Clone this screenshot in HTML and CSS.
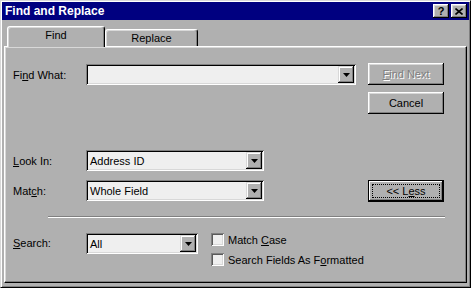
FILE: index.html
```html
<!DOCTYPE html>
<html lang="en">
<head>
    <meta charset="UTF-8">
    <title>Find and Replace</title>
    <link rel="stylesheet" href="styles.css">
</head>
<body>
    <div class="window">
        <div class="titlebar">
            <span class="title">Find and Replace</span>
            <div class="title-btns">
                <span class="tbtn help">?</span>
                <span class="tbtn">
                    <svg width="8" height="7" viewBox="0 0 8 7"><path d="M0.5 0.5 L7.5 6.5 M7.5 0.5 L0.5 6.5" stroke="#000" stroke-width="1.6" fill="none"/></svg>
                </span>
            </div>
        </div>
        <div class="client">
            <div class="tabs">
                <div class="tab active">Find</div>
                <div class="tab">Replace</div>
            </div>
            <div class="panel">
                <div class="upper">
                    <div class="fields">
                        <div class="row find">
                            <span class="label">Fi<u>n</u>d What:</span>
                            <div class="combo wide">
                                <span class="value"></span>
                                <span class="arrow"><svg width="7" height="4" viewBox="0 0 7 4"><path d="M0 0 H7 L3.5 4 Z"/></svg></span>
                            </div>
                        </div>
                        <div class="row look">
                            <span class="label"><u>L</u>ook In:</span>
                            <div class="combo mid">
                                <span class="value">Address ID</span>
                                <span class="arrow"><svg width="7" height="4" viewBox="0 0 7 4"><path d="M0 0 H7 L3.5 4 Z"/></svg></span>
                            </div>
                        </div>
                        <div class="row match">
                            <span class="label">Mat<u>c</u>h:</span>
                            <div class="combo mid">
                                <span class="value">Whole Field</span>
                                <span class="arrow"><svg width="7" height="4" viewBox="0 0 7 4"><path d="M0 0 H7 L3.5 4 Z"/></svg></span>
                            </div>
                        </div>
                    </div>
                    <div class="buttons">
                        <div class="btn disabled"><span><u>F</u>ind Next</span></div>
                        <div class="btn"><span>Cancel</span></div>
                        <div class="btn default less"><span class="focus"><span>&lt;&lt; L<u>e</u>ss</span></span></div>
                    </div>
                </div>
                <div class="sep"></div>
                <div class="lower">
                    <span class="label"><u>S</u>earch:</span>
                    <div class="combo narrow">
                        <span class="value">All</span>
                        <span class="arrow"><svg width="7" height="4" viewBox="0 0 7 4"><path d="M0 0 H7 L3.5 4 Z"/></svg></span>
                    </div>
                    <div class="checks">
                        <div class="check"><span class="box"></span><span>Match <u>C</u>ase</span></div>
                        <div class="check"><span class="box"></span><span>Search Fields As F<u>o</u>rmatted</span></div>
                    </div>
                </div>
            </div>
        </div>
    </div>
</body>
</html>
```

FILE: styles.css
```css
:root {
    --face: #b0b0b0;
    --light: #d8d8d8;
    --shadow: #808080;
    --field: #efefef;
}

body {
    margin: 0;
    font-family: "Liberation Sans", Arial, sans-serif;
    font-size: 11px;
    color: #000;
    background: var(--face);
}

u {
    text-underline-offset: 1px;
}

.window {
    width: 471px;
    height: 288px;
    box-sizing: border-box;
    padding: 1px;
    background: var(--face);
    border: 1px solid;
    border-color: var(--light) #000 #000 var(--light);
    box-shadow: inset 1px 1px #fff, inset -1px -1px var(--shadow);
    display: flex;
    flex-direction: column;
}

/* Title bar */
.titlebar {
    height: 18px;
    background: #000080;
    color: #fff;
    display: flex;
    align-items: center;
    justify-content: space-between;
    padding-left: 3px;
}

.title {
    font-weight: bold;
    font-size: 12px;
}

.title-btns {
    display: flex;
    gap: 2px;
    margin-right: 2px;
}

.tbtn {
    width: 16px;
    height: 14px;
    box-sizing: border-box;
    background: var(--face);
    color: #000;
    box-shadow: inset -1px -1px #000, inset 1px 1px #fff, inset -2px -2px var(--shadow), inset 2px 2px var(--light);
    display: flex;
    align-items: center;
    justify-content: center;
}

.tbtn.help {
    font-weight: bold;
    font-size: 11px;
    line-height: 1;
}

/* Tabs */
.client {
    padding: 6px 2px 0 2px;
}

.tabs {
    display: flex;
    align-items: flex-end;
    padding-left: 3px;
}

.tab {
    box-sizing: border-box;
    width: 93px;
    height: 17px;
    padding-top: 1px;
    line-height: 14px;
    text-align: center;
    background: var(--face);
    border-top: 1px solid #fff;
    border-left: 1px solid #fff;
    border-right: 1px solid #000;
    border-radius: 3px 3px 0 0;
    box-shadow: inset -1px 0 var(--shadow), inset 1px 1px var(--light);
}

.tab.active {
    width: 98px;
    height: 21px;
    margin-bottom: -1px;
    position: relative;
    z-index: 1;
}

.panel {
    height: 237px;
    box-sizing: border-box;
    border: 1px solid;
    border-color: #fff #000 #000 #fff;
    box-shadow: inset -1px -1px var(--shadow), inset 1px 1px var(--light);
}

/* Upper section */
.upper {
    display: flex;
    padding: 16px 22px 0 8px;
}

.fields {
    display: flex;
    flex-direction: column;
}

.row {
    display: flex;
    align-items: center;
}

.row.find { margin-top: 1px; }
.row.look { margin-top: 65px; }
.row.match { margin-top: 9px; }

.label {
    width: 73px;
    flex: none;
}

.combo {
    height: 21px;
    box-sizing: border-box;
    padding: 2px;
    background: var(--field);
    box-shadow: inset 1px 1px var(--shadow), inset -1px -1px #fff, inset 2px 2px #000, inset -2px -2px var(--light);
    display: flex;
    align-items: center;
}

.combo.wide { width: 270px; }
.combo.mid { width: 178px; }
.combo.narrow { width: 112px; }

.value {
    flex: 1;
    padding-left: 2px;
    white-space: nowrap;
}

.arrow {
    width: 16px;
    height: 17px;
    box-sizing: border-box;
    background: var(--face);
    box-shadow: inset -1px -1px #000, inset 1px 1px var(--light), inset -2px -2px var(--shadow), inset 2px 2px #fff;
    display: flex;
    align-items: center;
    justify-content: center;
}

.buttons {
    margin-left: auto;
    display: flex;
    flex-direction: column;
    gap: 7px;
}

.btn {
    width: 76px;
    height: 22px;
    box-sizing: border-box;
    background: var(--face);
    box-shadow: inset -1px -1px #000, inset 1px 1px #fff, inset -2px -2px var(--shadow), inset 2px 2px var(--light);
    display: flex;
    align-items: center;
    justify-content: center;
}

.btn.disabled {
    color: var(--shadow);
    text-shadow: 1px 1px #fff;
}

.btn.default {
    border: 1px solid #000;
    box-shadow: inset -1px -1px #000, inset 1px 1px #fff, inset -2px -2px var(--shadow);
    padding: 3px;
}

.btn.less {
    margin-top: 59px;
}

.focus {
    flex: 1;
    align-self: stretch;
    border: 1px dotted #000;
    display: flex;
    align-items: center;
    justify-content: center;
}

/* Separator and lower section */
.sep {
    margin: 14px 0 0 43px;
    width: 397px;
    border-top: 1px solid var(--shadow);
    border-bottom: 1px solid #fff;
}

.lower {
    display: flex;
    align-items: flex-start;
    padding-left: 8px;
    margin-top: 15px;
}

.lower .label {
    line-height: 21px;
}

.checks {
    margin-left: 13px;
    display: flex;
    flex-direction: column;
    gap: 7px;
}

.check {
    display: flex;
    align-items: center;
    gap: 4px;
    height: 13px;
}

.box {
    width: 13px;
    height: 13px;
    box-sizing: border-box;
    background: var(--field);
    box-shadow: inset 1px 1px var(--shadow), inset -1px -1px #fff, inset 2px 2px #5a5a5a, inset -2px -2px var(--light);
}
```
